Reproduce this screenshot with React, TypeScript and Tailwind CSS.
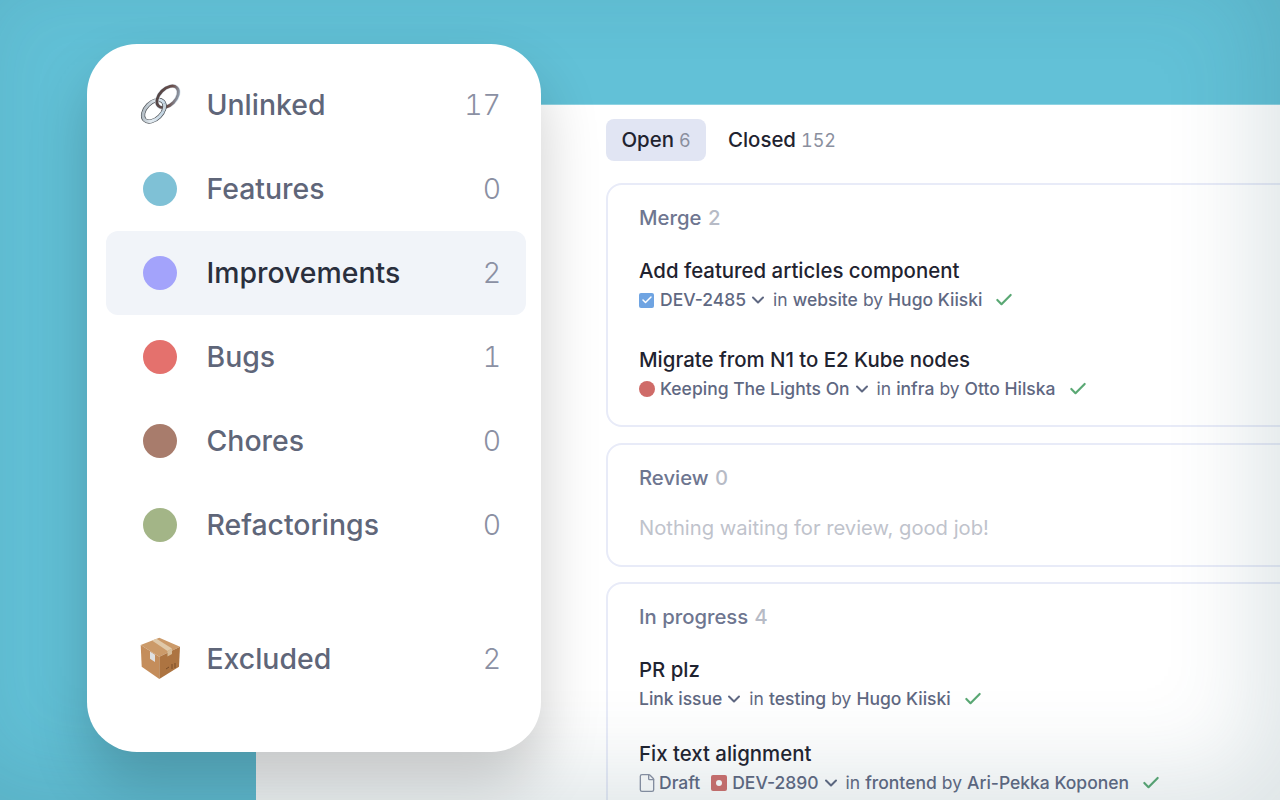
import { Check, ChevronDown, File } from 'lucide-react'
import type { ReactNode } from 'react'

function LinkIcon() {
  const upper = 'rotate(45 31 13.5)'
  const lower = 'rotate(45 16.5 28)'
  return (
    <svg width="46" height="44" viewBox="0 0 46 44" fill="none">
      <defs>
        <linearGradient id="ringA" x1="0" y1="1" x2="1" y2="0">
          <stop offset="0" stopColor="#a3adb5" />
          <stop offset="0.5" stopColor="#e4ecf2" />
          <stop offset="1" stopColor="#b4cbdc" />
        </linearGradient>
        <linearGradient id="ringB" x1="1" y1="0" x2="0" y2="1">
          <stop offset="0" stopColor="#9db9cf" />
          <stop offset="0.4" stopColor="#6b4f4c" />
          <stop offset="1" stopColor="#4d4344" />
        </linearGradient>
        <clipPath id="crossing">
          <circle cx="27.6" cy="24.6" r="4" />
        </clipPath>
      </defs>
      {/* lower ring */}
      <ellipse cx="16.5" cy="28" rx="8.5" ry="13.5" transform={lower} stroke="#4f5358" strokeWidth="4.4" />
      <ellipse cx="16.5" cy="28" rx="8.5" ry="13.5" transform={lower} stroke="url(#ringA)" strokeWidth="3" />
      {/* upper ring */}
      <ellipse cx="31" cy="13.5" rx="8.5" ry="13.5" transform={upper} stroke="#dbe6ee" strokeWidth="4.2" />
      <ellipse cx="31" cy="13.5" rx="8.5" ry="13.5" transform={upper} stroke="url(#ringB)" strokeWidth="3" />
      {/* lower ring passes back over the upper one */}
      <g clipPath="url(#crossing)">
        <ellipse cx="16.5" cy="28" rx="8.5" ry="13.5" transform={lower} stroke="#4f5358" strokeWidth="4.4" />
        <ellipse cx="16.5" cy="28" rx="8.5" ry="13.5" transform={lower} stroke="#c9d4dc" strokeWidth="3" />
      </g>
    </svg>
  )
}

function BoxIcon() {
  return (
    <svg width="42" height="44" viewBox="0 0 42 44">
      <polygon points="20.3,0.7 41,9.7 20.3,19.7 1.7,8" fill="#cb9a69" />
      <polygon points="1.7,8 20.3,19.7 20.3,42 2.7,29.7" fill="#c48d5b" />
      <polygon points="41,9.7 20.3,19.7 20.3,42 40,29.7" fill="#ad7441" />
      <polygon points="13,3.5 17.5,1.8 33,11.5 28.5,14" fill="#e0c9a9" />
      <polygon points="28.5,14 33,11.5 33,17 28.5,19.5" fill="#d6bc98" />
      <polygon points="11,14.5 16,17.8 16,25 11,21.8" fill="#dfe1e3" />
      <path d="M27 32 l3 -2 M33 27 v5 M36 26 v5" stroke="#7a4d28" strokeWidth="1" />
    </svg>
  )
}

function Row({ icon, label, count, active }: { icon: ReactNode; label: string; count: number; active?: boolean }) {
  return (
    <div className={`flex items-center h-[84px] pl-[32px] pr-[25px] rounded-xl ${active ? 'bg-[#f1f4f9]' : ''}`}>
      <div className="w-[44px] flex justify-center">{icon}</div>
      <span className={`ml-[24.5px] flex-1 text-[28.4px] font-[450] ${active ? 'text-[#2a2f3d]' : 'text-[#5f6679]'}`}>{label}</span>
      <span className="text-[28.4px] font-light tabular-nums text-[#8b90a3]">{count}</span>
    </div>
  )
}

function Dot({ color }: { color: string }) {
  return <div className={`w-[34px] h-[34px] rounded-full ${color}`} />
}

function Section({ title, count, children, className }: { title: string; count: number; children: ReactNode; className?: string }) {
  return (
    <div className={`w-[800px] rounded-[16px] border-2 border-[#e8ebf8] pl-[31px] ${className ?? ''}`}>
      <div className="text-[20.3px] leading-[28px] font-[450] text-[#6e7690]">
        {title} <span className="ml-[1px] tabular-nums text-[#b7bbc6]">{count}</span>
      </div>
      {children}
    </div>
  )
}

function Item({ title, children, repo, author, className }: { title: string; children: ReactNode; repo: string; author: string; className?: string }) {
  return (
    <div className={className}>
      <div className="text-[20.4px] leading-[28px] font-[450] text-[#1f2330]">{title}</div>
      <div className="flex items-center h-[28px] mt-[1px] text-[17.5px] font-[450] text-[#5f6882] whitespace-nowrap">
        {children}
        <ChevronDown className="w-[20px] h-[20px] ml-[2px] mr-[5px]" strokeWidth={2.4} />
        <span className="font-normal">in</span>
        <span className="ml-[5px]">{repo}</span>
        <span className="ml-[5px] font-normal">by</span>
        <span className="ml-[5px]">{author}</span>
        <Check className="w-[20px] h-[20px] ml-[12px] text-[#5aa874]" strokeWidth={2.6} />
      </div>
    </div>
  )
}

export default function App() {
  return (
    <div className="relative w-[1280px] h-[800px] overflow-hidden bg-[#62c1d7] pt-[104px] pl-[256px] font-['Inter',sans-serif]">
      {/* main panel */}
      <div className="h-[696px] bg-white border-t border-[#8fd3e2] pl-[350px] pt-[14px]">
        <div className="flex items-center gap-[6px]">
          <div className="h-[42px] w-[100px] flex items-center justify-center rounded-lg bg-[#e1e5f3] text-[20.4px] font-[450] text-[#1f2330]">
            Open<span className="ml-[5px] text-[18px] font-normal tabular-nums text-[#8a8f9e]">6</span>
          </div>
          <div className="h-[42px] px-[16px] flex items-center text-[20.4px] font-[450] text-[#1f2330]">
            Closed<span className="ml-[5px] text-[18px] font-normal tabular-nums text-[#8a8f9e]">152</span>
          </div>
        </div>

        <Section title="Merge" count={2} className="mt-[22px] h-[244px] pt-[19px]">
          <Item title="Add featured articles component" repo="website" author="Hugo Kiiski" className="mt-[25px]">
            <div className="w-[15px] h-[15px] mr-[6px] rounded-[2px] bg-[#6fa4e2] flex items-center justify-center">
              <Check className="w-[12px] h-[12px] text-white" strokeWidth={3} />
            </div>
            DEV-2485
          </Item>
          <Item title="Migrate from N1 to E2 Kube nodes" repo="infra" author="Otto Hilska" className="mt-[32px]">
            <div className="w-[16px] h-[16px] mr-[5px] rounded-full bg-[#cf6b68]" />
            Keeping The Lights On
          </Item>
        </Section>

        <Section title="Review" count={0} className="mt-[16px] h-[124px] pt-[19px]">
          <div className="mt-[22px] text-[20.2px] leading-[28px] text-[#bfc3cc]">Nothing waiting for review, good job!</div>
        </Section>

        <Section title="In progress" count={4} className="mt-[15px] h-[300px] pt-[19px]">
          <Item title="PR plz" repo="testing" author="Hugo Kiiski" className="mt-[25px]">
            Link issue
          </Item>
          <Item title="Fix text alignment" repo="frontend" author="Ari-Pekka Koponen" className="mt-[27px]">
            <File className="w-[20px] h-[20px] -ml-[2px] mr-[2px] text-[#8b92a5]" strokeWidth={1.6} />
            Draft
            <div className="w-[16px] h-[16px] ml-[11px] mr-[5px] rounded-[2px] bg-[#cf6f6d] flex items-center justify-center">
              <div className="w-[6px] h-[6px] rounded-full bg-white" />
            </div>
            DEV-2890
          </Item>
        </Section>
      </div>

      {/* edge vignette */}
      <div className="absolute inset-0 pointer-events-none shadow-[inset_-25px_-25px_90px_rgba(47,92,106,0.16)]" />

      {/* filter card */}
      <div className="absolute left-[87px] top-[44px] w-[454px] h-[708px] bg-white rounded-[50px] pt-[19px] pl-[19px] pr-[15px] shadow-[0_30px_60px_rgba(0,0,0,0.2)]">
        <Row icon={<LinkIcon />} label="Unlinked" count={17} />
        <Row icon={<Dot color="bg-[#7fc1d6]" />} label="Features" count={0} />
        <Row icon={<Dot color="bg-[#a3a3fb]" />} label="Improvements" count={2} active />
        <Row icon={<Dot color="bg-[#e4716d]" />} label="Bugs" count={1} />
        <Row icon={<Dot color="bg-[#a87c6c]" />} label="Chores" count={0} />
        <Row icon={<Dot color="bg-[#a3b587]" />} label="Refactorings" count={0} />
        <div className="h-[50px]" />
        <Row icon={<BoxIcon />} label="Excluded" count={2} />
      </div>
    </div>
  )
}
